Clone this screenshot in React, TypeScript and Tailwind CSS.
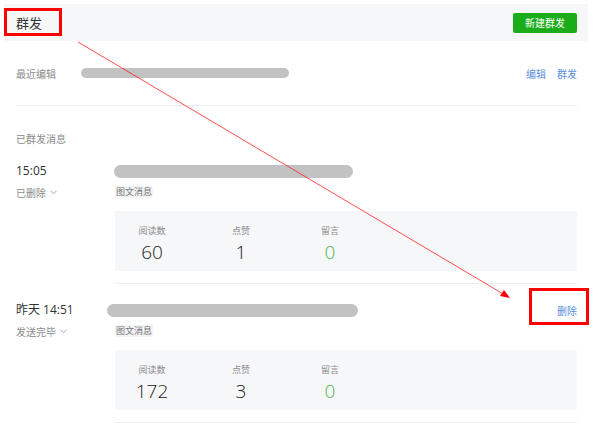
import React from "react";

const font = { fontFamily: '"Noto Sans CJK SC", "Noto Sans", sans-serif' };
const latin = { fontFamily: '"Open Sans", "Noto Sans CJK SC", sans-serif' };

function Chevron() {
  return (
    <svg width="7" height="5" viewBox="0 0 7 5" className="ml-[4px] inline-block">
      <path d="M0.5 0.8 L3.5 3.8 L6.5 0.8" fill="none" stroke="#9a9a9a" strokeWidth="0.9" />
    </svg>
  );
}

function Stat({ label, value, green }: { label: string; value: string; green?: boolean }) {
  return (
    <div className="w-[60px] flex flex-col items-center">
      <div className="text-[9px] leading-[12px] text-[#8a8a8a]">{label}</div>
      <div
        className={`mt-[5px] text-[19px] leading-[20px] font-light ${green ? "text-[#4fb54f]" : "text-[#222]"}`}
        style={latin}
      >
        {value}
      </div>
    </div>
  );
}

function Row({
  time,
  status,
  barLeft,
  barWidth,
  reads,
  likes,
  del,
}: {
  time: string;
  status: string;
  barLeft: number;
  barWidth: number;
  reads: string;
  likes: string;
  del?: boolean;
}) {
  return (
    <div className="flex pt-[15px]">
      <div className="w-[99px] shrink-0">
        <div className="h-[22px] flex items-center text-[12px] font-normal text-[#333]" style={latin}>
          {time}
        </div>
        <div className="mt-[4px] h-[12px] flex items-center text-[10px] text-[#8a8a8a]">
          {status}
          <Chevron />
        </div>
      </div>
      <div className="flex-1">
        <div className="h-[22px] flex items-center justify-between">
          <div
            className="h-[13px] rounded-full bg-[#c2c2c2] blur-[0.6px]"
            style={{ marginLeft: barLeft, width: barWidth }}
          />
          {del && <span className="text-[10px] text-[#5a8fdb]">删除</span>}
        </div>
        <div className="mt-[4px] h-[12px] flex">
          <span className="px-[1px] bg-[#f3f4f6] text-[9px] leading-[12px] text-[#777]">图文消息</span>
        </div>
        <div className="mt-[13px] h-[60px] bg-[#f6f7f9] flex gap-[29px] pl-[7px] pt-[14px]">
          <Stat label="阅读数" value={reads} />
          <Stat label="点赞" value={likes} />
          <Stat label="留言" value="0" green />
        </div>
        <div className="mt-[12px] h-px bg-[#ececef]" />
      </div>
    </div>
  );
}

export default function App() {
  return (
    <div className="relative w-[600px] h-[429px] bg-white overflow-hidden" style={font}>
      <div className="pt-[4px] pl-[4px] pr-[12px]">
        <div className="h-[37px] bg-[#f6f7f9] flex items-center justify-between pl-[12px] pr-[11px]">
          <span className="text-[13px] text-[#333]">群发</span>
          <button className="w-[64px] h-[20px] rounded-[2px] bg-[#1aad19] text-white text-[10px] flex items-center justify-center">
            新建群发
          </button>
        </div>
      </div>
      <div className="pl-[16px] pr-[23px]">
        <div className="h-[64px] flex items-center">
          <span className="w-[65px] text-[10px] text-[#8a8a8a]">最近编辑</span>
          <div className="w-[208px] h-[10px] rounded-full bg-[#c2c2c2] blur-[0.6px]" />
          <div className="ml-auto flex gap-[11px] text-[10px] text-[#5a8fdb]">
            <span>编辑</span>
            <span>群发</span>
          </div>
        </div>
        <div className="h-px bg-[#ececef]" />
        <div className="mt-[25px] h-[14px] flex items-center text-[10px] text-[#8a8a8a]">已群发消息</div>
        <Row time="15:05" status="已删除" barLeft={-1} barWidth={239} reads="60" likes="1" />
        <Row time="昨天 14:51" status="发送完毕" barLeft={-8} barWidth={251} reads="172" likes="3" del />
      </div>

      {/* annotations */}
      <div className="absolute left-[4px] top-[8px] w-[58px] h-[28px] border-[3px] border-[#ff0000]" />
      <div className="absolute left-[529px] top-[288px] w-[60px] h-[37px] border-[3px] border-[#ff0000]" />
      <svg className="absolute left-0 top-0" width="600" height="429">
        <line x1="78" y1="42" x2="505" y2="295" stroke="#ff2020" strokeWidth="0.8" />
        <polygon points="510,298 500,296 504,290" fill="#ff0000" />
      </svg>
    </div>
  );
}
